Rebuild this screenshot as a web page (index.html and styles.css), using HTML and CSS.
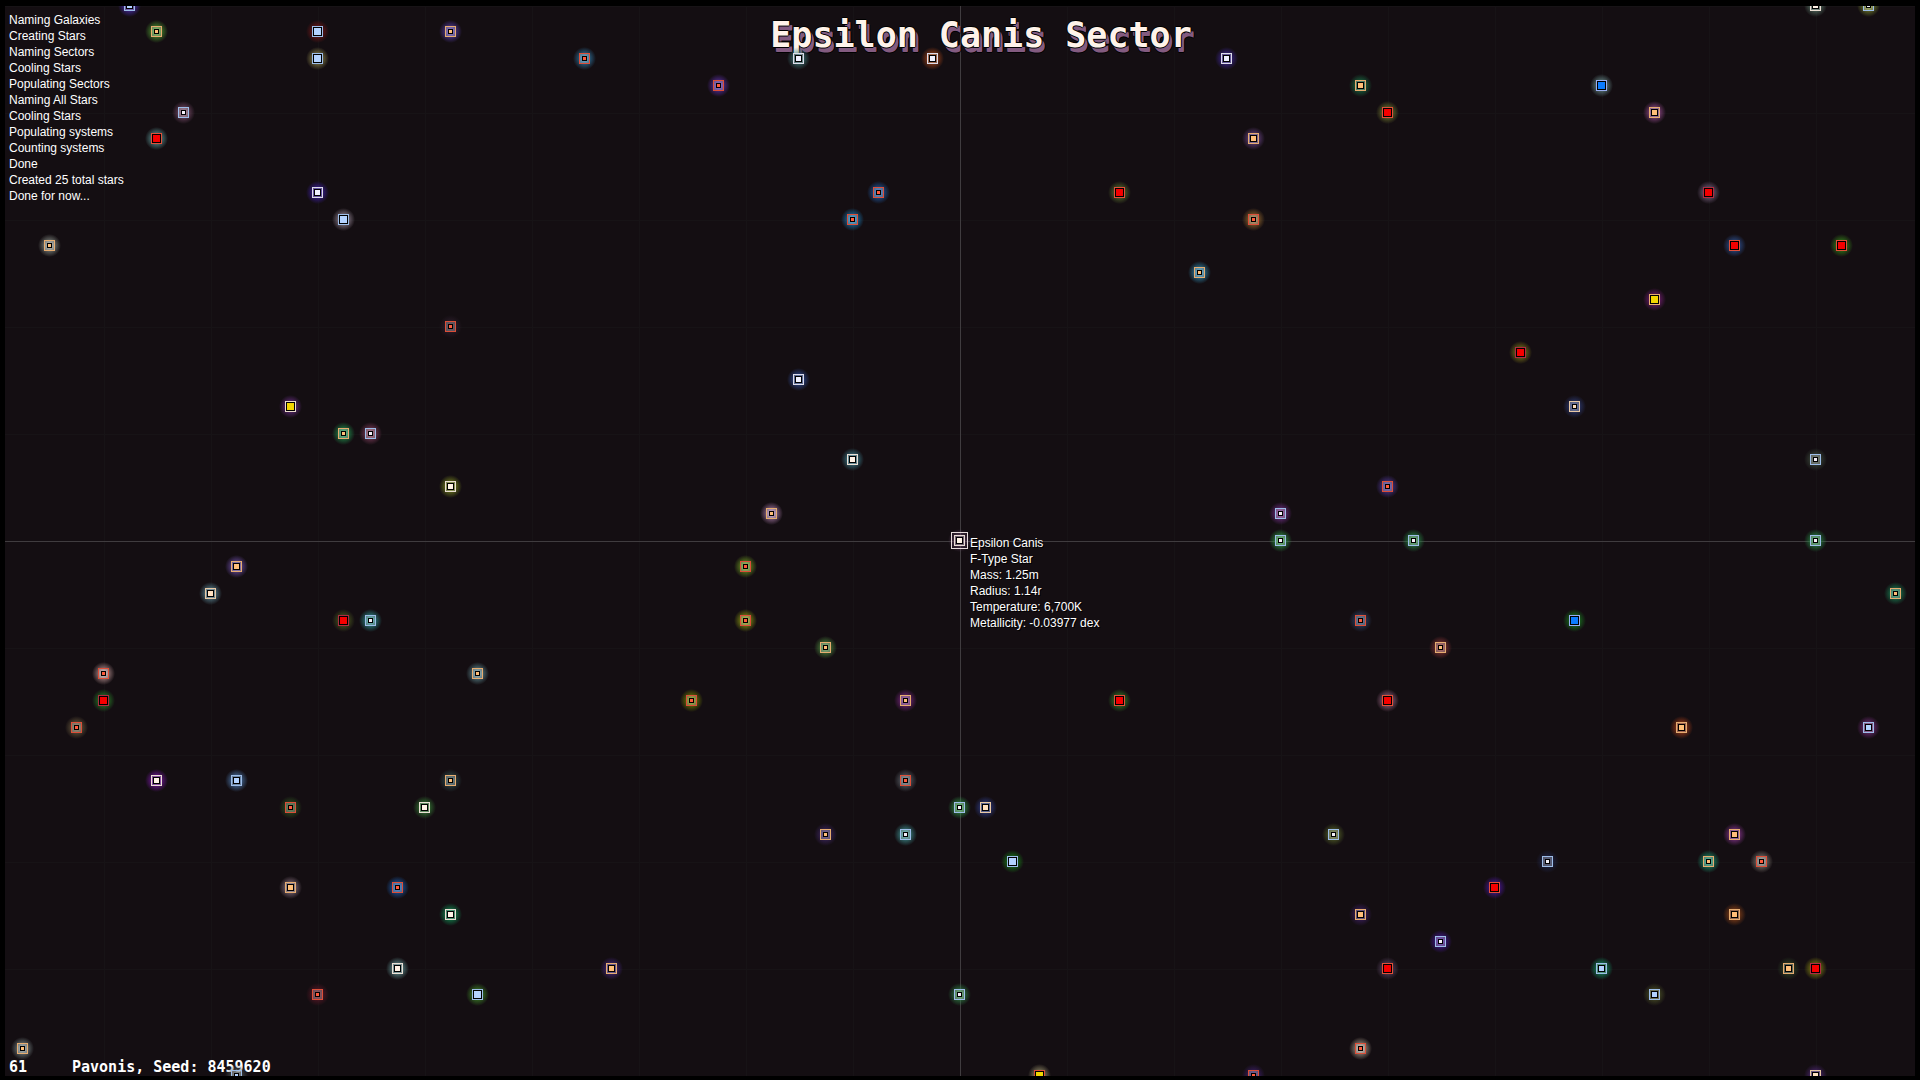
FILE: index.html
```
<!DOCTYPE html>
<html lang="en">
<head>
<meta charset="utf-8">
<title>Epsilon Canis Sector</title>
<link rel="stylesheet" href="styles.css">
</head>
<body>
<main class="sector">
  <div class="axis axis-h"></div>
  <div class="axis axis-v"></div>
  <h1 class="title">Epsilon Canis Sector</h1>
  <ul class="log">
    <li>Naming Galaxies</li>
    <li>Creating Stars</li>
    <li>Naming Sectors</li>
    <li>Cooling Stars</li>
    <li>Populating Sectors</li>
    <li>Naming All Stars</li>
    <li>Cooling Stars</li>
    <li>Populating systems</li>
    <li>Counting systems</li>
    <li>Done</li>
    <li>Created 25 total stars</li>
    <li>Done for now...</li>
  </ul>
  <footer class="status">
    <span class="fps">61</span>
    <span>Pavonis, Seed: 8459620</span>
  </footer>
  <div class="map" id="map">
    <ul class="info">
      <li>Epsilon Canis</li>
      <li>F-Type Star</li>
      <li>Mass: 1.25m</li>
      <li>Radius: 1.14r</li>
      <li>Temperature: 6,700K</li>
      <li>Metallicity: -0.03977 dex</li>
    </ul>
  </div>
</main>
<script src="script.js"></script>
</body>
</html>
```
FILE: styles.css
```
* { box-sizing: border-box; }
body {
  margin: 0;
  min-height: 100vh;
  display: flex;
  padding: 6px 5px 4px;
  background: #000;
  color: #fff;
  font: 12px/16px "Liberation Sans", Arial, sans-serif;
}
ul { margin: 0; padding: 0; list-style: none; }
.sector {
  position: relative;
  flex: 1;
  display: flex;
  flex-direction: column;
  overflow: hidden;
  background-color: #140e12;
  /* two cells per tile, so that a line always passes through the centre */
  background-image:
    repeating-linear-gradient(to right, #171316 0 1px, transparent 1px 107px),
    repeating-linear-gradient(to bottom, #171316 0 1px, transparent 1px 107px);
  background-size: 214px 214px;
  background-position: center;
}
.axis { position: absolute; background: #403c3f; }
.axis-h { left: 0; right: 0; top: 50%; height: 1px; }
.axis-v { top: 0; bottom: 0; left: 50%; width: 1px; }
.title {
  position: relative;
  margin: 0;
  padding: 9px 0 0 42px;
  height: 56px;
  text-align: center;
  white-space: nowrap;
  font: bold 35px/40px "DejaVu Sans Mono", monospace;
  color: #fff3ea;
  text-shadow: 1px 0 #000, -1px 0 #000, 0 1px #000, 0 -1px #000,
    3px 5px #835b80, 3px 4px #835b80, 4px 5px #000, 3px 6px #000;
}
.log {
  position: absolute;
  left: 4px;
  top: 6px;
}
.status {
  position: relative;
  margin-top: auto;
  display: flex;
  padding: 0 4px;
  font: bold 15px/18px "DejaVu Sans Mono", monospace;
}
.fps { width: 63px; }
.map {
  position: absolute;
  left: 50%;
  top: 50%;
  z-index: 0;
  width: 0;
  height: 0;
}
.info {
  position: absolute;
  left: 10px;
  top: -6px;
  white-space: nowrap;
  text-shadow: 1px 1px #000;
}
.star {
  position: absolute;
  width: 11px;
  height: 11px;
  border: 1px solid var(--edge);
  background: rgba(255, 255, 255, 0.25);
  background-clip: padding-box;
}
/* the halo lies under the star's frame */
.star::before {
  content: "";
  position: absolute;
  inset: -7px;
  z-index: -1;
  border-radius: 50%;
  background: radial-gradient(circle closest-side,
    var(--glow) 15%, color-mix(in srgb, var(--glow) 45%, transparent) 60%, transparent);
}
.star::after {
  content: "";
  position: absolute;
  inset: 0;
  border: 1px solid #000;
  background: var(--core);
}
.small::after { inset: 2px; }
.medium::after { inset: 1px; }
.selected::after { inset: 1px; }
.selected { outline: 1px solid #e8dcdc; outline-offset: 2px; }
.azure { --edge: #9dbde8; --core: #b3d2ff; }
.ice { --edge: #9dbde8; --core: #f4f0fa; }
.white { --edge: #dcdcea; --core: #eff0ff; }
.cream { --edge: #ebdfd5; --core: #fff2e6; }
.peach { --edge: #e8c8a4; --core: #ffe0c0; }
.gold { --edge: #e6ac70; --core: #ffbe78; }
.ember { --edge: #dc4e38; --core: #ff5a3c; }
.red { --edge: #e0503a; --core: #f50000; }
.crimson { --edge: #ad2c42; --core: #f50000; }
.blue { --edge: #9aaef0; --core: #0b7bff; }
.yellow { --edge: #e8ac70; --core: #f2d500; }
.lemon { --edge: #eadccb; --core: #f2d500; }
.flame { --edge: #dc4e38; --core: #f2d500; }
```
FILE: script.js
```
// Each entry: column, row (cells from the centre), size, colour class, glow.
const STARS = `
-31 -20 medium azure #5030c0
-30 -19 small gold #50a030
-24 -19 large azure #801818
-24 -18 large azure #989050
-19 -19 small gold #5a40b0
-14 -18 small ember #3080b0
-29 -16 small ice #805070
-30 -15 large red #60a0a0
-24 -13 medium white #4020b0
-23 -12 large azure #a090a0
-34 -11 small gold #909890
-9 -17 small ember #6030b0
-6 -18 medium white #408080
-1 -18 medium white #b04818
10 -18 medium white #4028a0
15 -17 medium gold #187848
24 -17 large blue #709898
16 -16 large red #788030
26 -16 medium gold #a05098
11 -15 medium gold #704890
-3 -13 small ember #2060b0
-4 -12 small ember #1880c0
6 -13 large red #607830
28 -13 large crimson #806888
11 -12 small ember #a07030
9 -10 small gold #3090b8
29 -11 large red #3058a0
33 -11 large red #389018
26 -9 large yellow #802080
21 -7 large crimson #888018
23 -5 small peach #304080
32 -20 medium cream #608070
34 -20 small ice #809030
-19 -8 small ember #302030
-25 -5 large lemon #703090
-23 -4 small gold #209850
-22 -4 small ice #884060
-19 -2 medium cream #809020
-6 -6 medium white #3050a0
-4 -3 medium cream #408898
-7 -1 small gold #b080b0
32 -3 small ice #405040
16 -2 small ember #5038a0
12 -1 small ice #783090
12 0 small ice #30a048
17 0 small ice #289048
32 0 small ice #289048
-27 1 medium gold #7050b0
-28 2 medium peach #6090a0
-23 3 large crimson #506020
-22 3 small ice #309898
-32 5 small ember #c09898
-32 6 large crimson #288828
-33 7 small ember #706040
-18 5 small gold #609098
-8 1 small ember #70a020
-8 3 small ember #90a010
-5 4 small gold #509040
-10 6 small ember #788800
-2 6 small gold #802888
35 2 small gold #188858
15 3 small ember #304870
23 3 large blue #188820
18 4 small gold #903838
6 6 large red #388828
16 6 large red #a06888
27 7 medium gold #b04018
34 7 medium azure #803088
-30 9 medium cream #8018b0
-27 9 medium azure #5080b8
-19 9 small gold #305050
-25 10 small ember #305820
-20 10 medium cream #388838
-2 9 small ember #606870
0 10 small ice #309848
1 10 medium peach #304090
-5 11 small gold #402868
-2 11 small ice #409898
2 12 large azure #188818
14 11 small ice #586828
29 11 medium gold #903898
22 12 small ice #202850
28 12 small gold #189870
30 12 small ember #888078
-25 13 medium gold #907888
-21 13 small ember #1860b8
-19 14 medium cream #109858
20 13 large red #5018a8
15 14 medium gold #402068
18 15 small ice #4818a0
29 14 medium gold #984818
-21 16 medium cream #68a0a0
-13 16 medium gold #482888
16 16 large red #604868
24 16 medium azure #109868
26 17 medium azure #505828
31 16 medium gold #304828
32 16 large crimson #888810
-24 17 small ember #601828
-18 17 large azure #409028
0 17 small ice #308848
-35 19 small gold #809090
15 19 small ember #b0a090
-27 20 small azure #505858
3 20 large flame #a09870
11 20 small ember #402070
32 20 medium peach #502878
0 0 selected cream #604060
`.trim().split('\n');

const CELL = 26.75;
const RADIUS = 6;
const map = document.getElementById('map');

for (const line of STARS) {
  const [col, row, size, colour, glow] = line.split(' ');
  const star = document.createElement('span');
  star.className = `star ${size} ${colour}`;
  star.style.left = `${Math.floor(col * CELL) - RADIUS}px`;
  star.style.top = `${Math.floor(row * CELL) - RADIUS}px`;
  star.style.setProperty('--glow', glow);
  map.append(star);
}
```
